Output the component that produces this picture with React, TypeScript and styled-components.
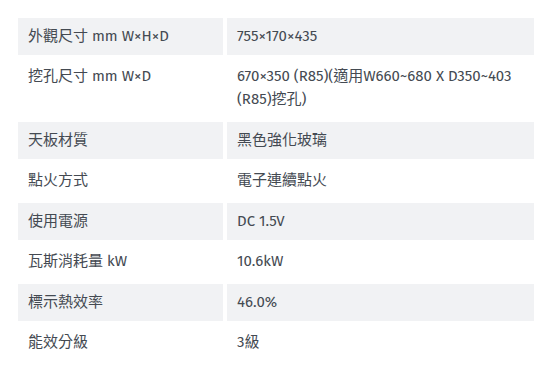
import React from "react";
import styled, { createGlobalStyle } from "styled-components";

const GlobalStyle = createGlobalStyle`
  html, body { margin: 0; padding: 0; background: #ffffff; }
  body {
    font-family: "Fira Sans", "Noto Sans CJK TC", "Noto Sans", sans-serif;
    -webkit-font-smoothing: antialiased;
  }
`;

const Page = styled.div`
  padding: 18px 18px 0 18px;
`;

const SpecGrid = styled.dl`
  margin: 0;
  display: grid;
  grid-template-columns: 205px 307px;
  gap: 4px;
`;

const Cell = styled.div<{ $shaded: boolean }>`
  padding: 6.75px 10px;
  font-size: 15px;
  line-height: 23px;
  color: #444a52;
  background: ${(p) => (p.$shaded ? "#f1f2f4" : "transparent")};
`;

const Label = styled(Cell).attrs({ as: "dt" })``;
const Value = styled(Cell).attrs({ as: "dd" })`
  margin: 0;
`;

const specs: [string, string][] = [
  ["外觀尺寸 mm W×H×D", "755×170×435"],
  ["挖孔尺寸 mm W×D", "670×350 (R85)(適用W660~680 X D350~403 (R85)挖孔)"],
  ["天板材質", "黑色強化玻璃"],
  ["點火方式", "電子連續點火"],
  ["使用電源", "DC 1.5V"],
  ["瓦斯消耗量 kW", "10.6kW"],
  ["標示熱效率", "46.0%"],
  ["能效分級", "3級"],
];

export default function App() {
  return (
    <>
      <GlobalStyle />
      <Page>
        <SpecGrid>
          {specs.map(([k, v], i) => (
            <React.Fragment key={k}>
              <Label $shaded={i % 2 === 0}>{k}</Label>
              <Value $shaded={i % 2 === 0}>{v}</Value>
            </React.Fragment>
          ))}
        </SpecGrid>
      </Page>
    </>
  );
}
